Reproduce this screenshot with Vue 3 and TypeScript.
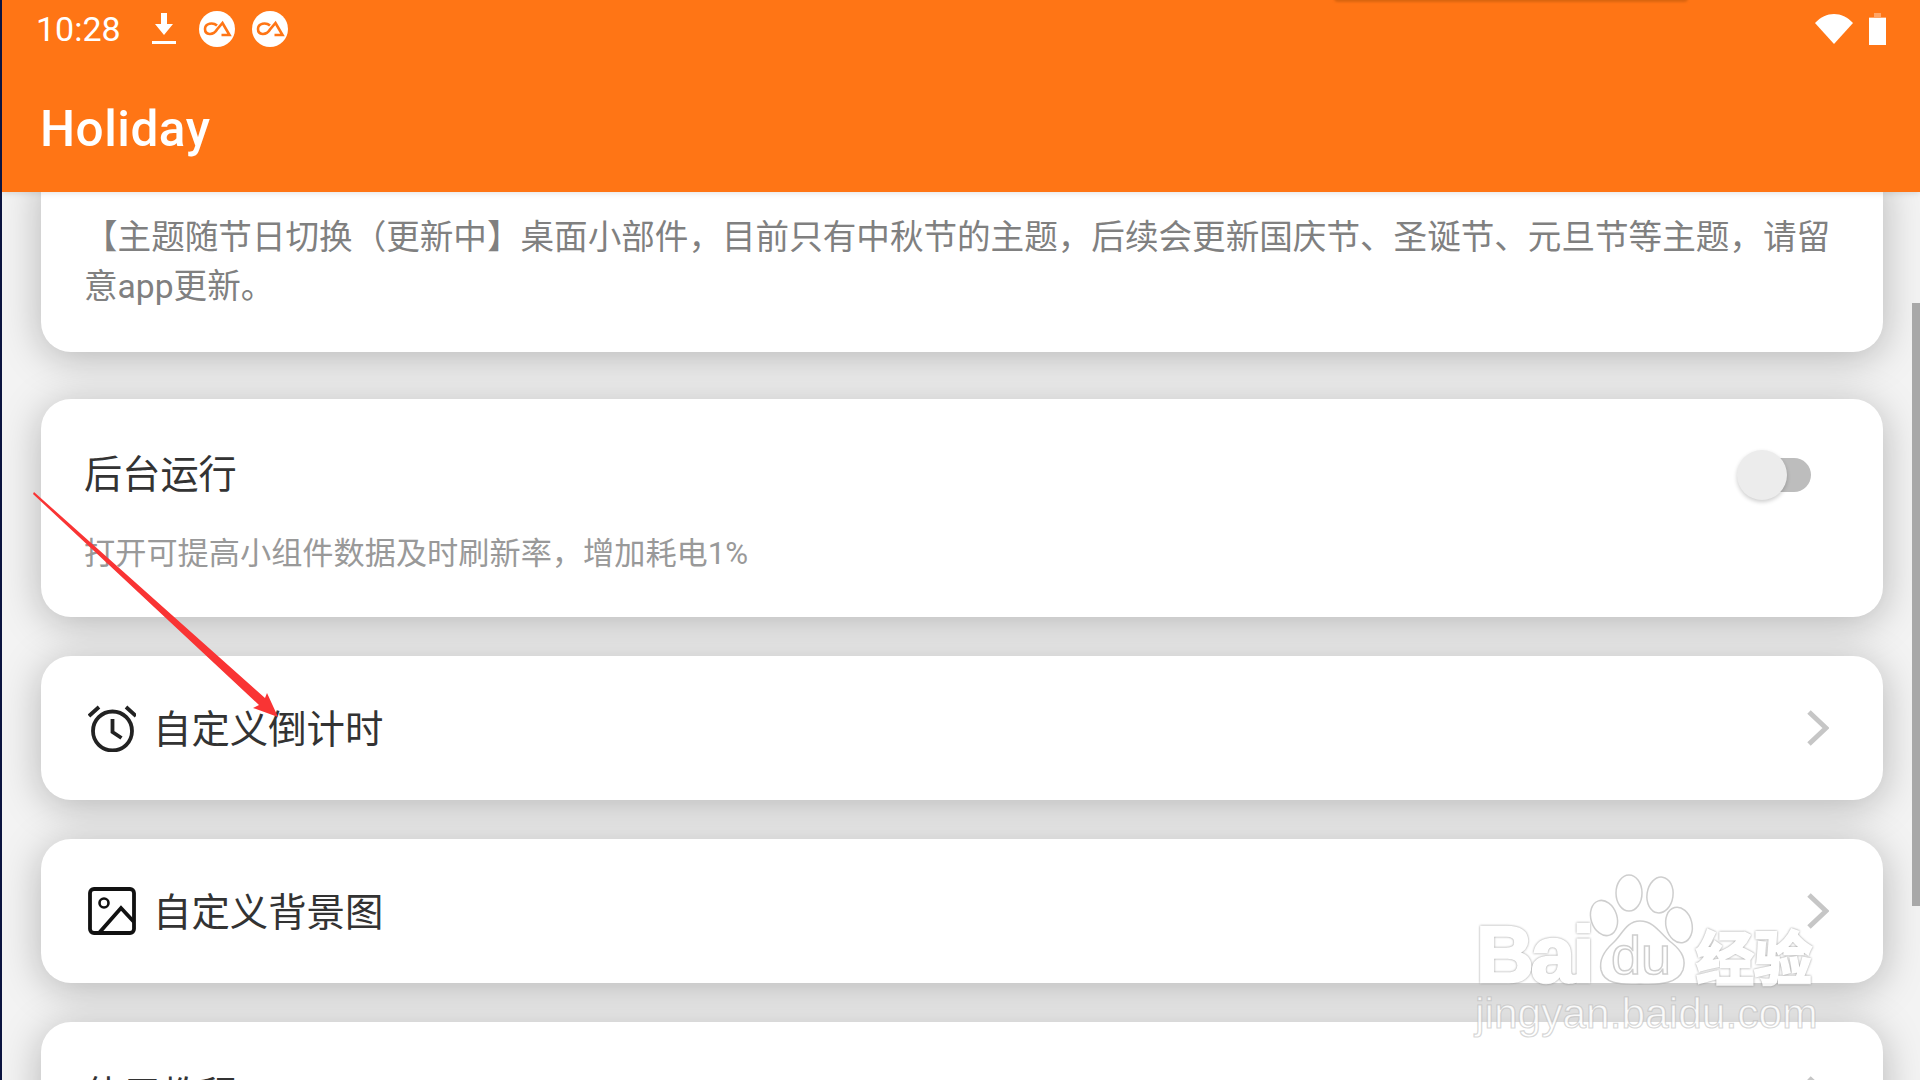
<script setup lang="ts">
import { ref } from 'vue';

const backgroundRun = ref(false);

const rows = [
  { label: '自定义倒计时', icon: 'clock' },
  { label: '自定义背景图', icon: 'image' },
  { label: '使用教程', icon: '' },
];
</script>

<template>
  <div class="screen">
    <header class="app-header">
      <div class="status-bar">
        <div class="status-left">
          <span class="time">10:28</span>
          <svg class="ic-download" width="24" height="32" viewBox="0 0 24 32">
            <path d="M9 0h6v11h6L12 22 3 11h6z" fill="#fff" />
            <rect y="28" width="24" height="3" fill="#fff" />
          </svg>
          <svg v-for="n in 2" :key="n" class="ic-app" width="36" height="36" viewBox="0 0 36 36">
            <circle cx="18" cy="18" r="18" fill="#fff" />
            <path
              d="M18 14.500C14 11 6 12 6 18c0 6 8 7 12 .5l5.500-6.500 7 12h-8"
              fill="none"
              stroke="#ff7515"
              stroke-width="2.600"
            />
          </svg>
        </div>
        <div class="status-right">
          <svg width="38" height="30" viewBox="0 0 38 30">
            <path d="M0 9C11-3 27-3 38 9L19 30z" fill="#fff" />
          </svg>
          <svg width="17" height="32" viewBox="0 0 17 32">
            <path d="M5 0h7v4h5v4H0V4h5z" fill="#fff" opacity=".35" />
            <rect y="5" width="17" height="27" fill="#fff" />
          </svg>
        </div>
        <div class="peek-shadow"></div>
      </div>
      <div class="toolbar">Holiday</div>
    </header>

    <main class="content">
      <section class="card card-intro">
        【主题随节日切换（更新中】桌面小部件，目前只有中秋节的主题，后续会更新国庆节、圣诞节、元旦节等主题，请留意app更新。
      </section>

      <section class="card card-switch">
        <div class="switch-head">
          <span class="switch-title">后台运行</span>
          <button class="switch" :class="{ on: backgroundRun }" @click="backgroundRun = !backgroundRun">
            <span class="knob"></span>
          </button>
        </div>
        <p class="switch-desc">打开可提高小组件数据及时刷新率，增加耗电1%</p>
      </section>

      <section v-for="row in rows" :key="row.label" class="card card-row">
        <svg v-if="row.icon === 'clock'" class="row-icon" width="48" height="48" viewBox="0 0 48 48">
          <g fill="none" stroke="#222" stroke-width="3.800">
            <circle cx="24.500" cy="27" r="19.500" />
            <path d="M24.500 15v13l9 6" />
            <path d="M1 12 11 3M48 12 38 3" />
          </g>
        </svg>
        <svg v-else-if="row.icon === 'image'" class="row-icon" width="48" height="48" viewBox="0 0 48 48">
          <g fill="none" stroke="#111" stroke-width="3.800">
            <rect x="2" y="2" width="44" height="44" rx="4" />
            <circle cx="16" cy="16" r="4.500" stroke-width="2.600" />
            <path d="M11 46 33 21l13 14" />
          </g>
        </svg>
        <span class="row-label">{{ row.label }}</span>
        <svg class="chevron" width="22" height="36" viewBox="0 0 22 36">
          <path d="M2 2 19 18 2 34" fill="none" stroke="#c6c6c6" stroke-width="5" />
        </svg>
      </section>
    </main>

    <div class="scroll-thumb"></div>

    <svg class="overlay" width="1920" height="1080" viewBox="0 0 1920 1080">
      <polygon points="34,492 265,698 267,693 278,717 253,708 259,705 33,494" fill="#f93434" />
      <g class="wm">
        <ellipse cx="1629" cy="893" rx="13" ry="18" />
        <ellipse cx="1660" cy="895" rx="13" ry="18" transform="rotate(8 1660 895)" />
        <ellipse cx="1604" cy="918" rx="13" ry="18" transform="rotate(-18 1604 918)" />
        <ellipse cx="1679" cy="925" rx="13" ry="18" transform="rotate(-14 1679 925)" />
        <path d="M1640 921c-14 0-18 14-27 22-10 9-14 17-12 27 3 13 17 15 39 14 22 1 38-1 43-14 3-10 0-18-11-27-11-8-17-22-32-22z" />
        <text class="wm-thick wm-big" x="1476" y="982">Bai</text>
        <text class="wm-du" x="1611" y="974">du</text>
        <text class="wm-thick wm-cn" x="1696" y="980">经验</text>
        <text class="wm-url" x="1475" y="1028">jingyan.baidu.com</text>
      </g>
    </svg>
  </div>
</template>

<style scoped>
.screen {
  position: relative;
  width: 1920px;
  height: 1080px;
  overflow: hidden;
  box-sizing: border-box;
  border-left: 2px solid #0b1440;
  background: #f3f3f3;
  font-family: Roboto, 'Noto Sans CJK SC', sans-serif;
}

.app-header {
  position: relative;
  z-index: 2;
  height: 192px;
  background: #ff7515;
  color: #fff;
  box-shadow: 0 1px 6px rgba(0, 0, 0, 0.12);
}

.status-bar {
  position: relative;
  display: flex;
  justify-content: space-between;
  align-items: center;
  height: 58px;
  padding: 0 34px 0 34px;
}

.status-left {
  display: flex;
  align-items: center;
}

.time {
  font-size: 34px;
  line-height: 58px;
  margin-right: 31px;
}

.ic-download {
  margin-right: 23px;
}

.ic-app {
  margin-right: 17px;
}

.status-right {
  display: flex;
  align-items: center;
  gap: 16px;
}

.peek-shadow {
  position: absolute;
  top: -6px;
  left: 1332px;
  width: 354px;
  height: 8px;
  border-radius: 4px;
  background: #d9640f;
  filter: blur(1px);
}

.toolbar {
  padding: 37px 0 0 38px;
  font-size: 49.500px;
  line-height: 68px;
  font-weight: 500;
  letter-spacing: 0.5px;
}

.content {
  display: flex;
  flex-direction: column;
  padding: 0 37px 0 39px;
}

.card {
  flex: none;
  box-sizing: border-box;
  background: #fff;
  border-radius: 30px;
  box-shadow: 0 6px 40px rgba(0, 0, 0, 0.26);
}

.card-intro {
  margin-top: -30px;
  padding: 51px 40px 41px 43px;
  font-size: 33.600px;
  line-height: 49px;
  color: #808080;
}

.card-switch {
  margin-top: 47px;
  height: 218px;
  padding: 54px 44px 0 43px;
}

.switch-head {
  display: flex;
  justify-content: space-between;
  align-items: center;
  height: 44px;
}

.switch-title {
  padding-bottom: 7px;
  font-size: 38.200px;
  color: #333;
}

.switch {
  position: relative;
  width: 72px;
  height: 34px;
  margin-right: 28px;
  padding: 0;
  border: 0;
  border-radius: 17px;
  background: #bdbdbd;
}

.knob {
  position: absolute;
  top: -8px;
  left: -2px;
  width: 50px;
  height: 50px;
  border-radius: 50%;
  background: #ececec;
  box-shadow: 0 2px 4px rgba(0, 0, 0, 0.2);
}

.switch.on .knob {
  left: 24px;
}

.switch-desc {
  margin: 37px 0 0;
  font-size: 31.200px;
  line-height: 40px;
  color: #999;
}

.card-row {
  display: flex;
  align-items: center;
  height: 144px;
  margin-top: 39px;
  padding: 0 54px 0 47px;
}

.row-icon {
  flex: none;
  margin-right: 17px;
}

.row-label {
  flex: 1;
  padding-bottom: 5px;
  font-size: 38.400px;
  color: #333;
}

.row-label:first-child {
  margin-left: -4px;
}

.scroll-thumb {
  position: absolute;
  top: 303px;
  right: 0;
  width: 8px;
  height: 603px;
  background: #a8a8a8;
}

.overlay {
  position: absolute;
  z-index: 3;
  top: 0;
  left: -2px;
  pointer-events: none;
}

.wm {
  fill: rgba(255, 255, 255, 0.75);
  stroke: rgba(165, 165, 165, 0.55);
  stroke-width: 1.500px;
  font-family: 'Liberation Sans', 'Noto Sans CJK SC', sans-serif;
}

.wm-thick {
  fill: #fff;
  stroke: #fff;
  stroke-width: 2.500px;
  opacity: 0.8;
  filter: drop-shadow(0 0 1px rgba(110, 110, 110, 0.9));
}

.wm-big {
  font-size: 80px;
  font-weight: 700;
  letter-spacing: -3px;
}

.wm-du {
  font-size: 54px;
}

.wm-cn {
  font-size: 58px;
  font-weight: 700;
}

.wm-url {
  font-size: 42.500px;
  fill: rgba(255, 255, 255, 0.85);
  stroke: rgba(175, 175, 175, 0.5);
  stroke-width: 1.200px;
}
</style>

<style>
body {
  margin: 0;
  overflow: hidden;
}
</style>
